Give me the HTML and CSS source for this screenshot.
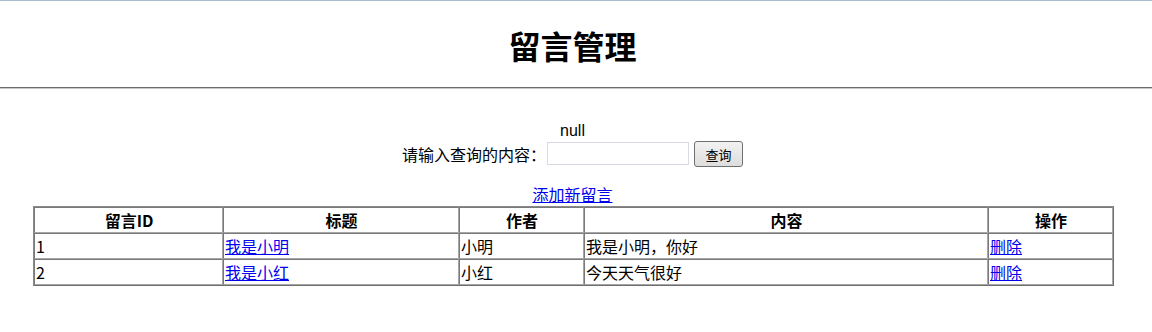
FILE: index.html
```html
<!DOCTYPE html>
<html lang="zh-CN">
<head>
    <meta charset="UTF-8">
    <title>留言管理</title>
    <link rel="stylesheet" href="styles.css">
</head>
<body>
    <div class="header">
        <h1>留言管理</h1>
    </div>
    <hr class="divider">
    <div class="search">
        <div class="msg">null</div>
        <form class="search-form">
            <label for="keyword">请输入查询的内容：</label>
            <input type="text" id="keyword" name="keyword">
            <button type="submit">查询</button>
        </form>
    </div>
    <div class="add">
        <a href="#">添加新留言</a>
    </div>
    <table class="list">
        <colgroup>
            <col class="c-id">
            <col class="c-title">
            <col class="c-author">
            <col class="c-content">
            <col class="c-op">
        </colgroup>
        <tr>
            <th>留言ID</th>
            <th>标题</th>
            <th>作者</th>
            <th>内容</th>
            <th>操作</th>
        </tr>
        <tr>
            <td>1</td>
            <td><a href="#">我是小明</a></td>
            <td>小明</td>
            <td>我是小明，你好</td>
            <td><a href="#">删除</a></td>
        </tr>
        <tr>
            <td>2</td>
            <td><a href="#">我是小红</a></td>
            <td>小红</td>
            <td>今天天气很好</td>
            <td><a href="#">删除</a></td>
        </tr>
    </table>
</body>
</html>
```

FILE: styles.css
```css
body {
    margin: 0;
    padding: 0;
    font-family: "Noto Sans CJK SC", "Liberation Sans", sans-serif;
    font-size: 16px;
    color: #000;
    background: #fff;
}
a {
    color: #0000ee;
}
.header {
    border-top: 1px solid #a9bdd3;
    height: 85px;
    padding-right: 7px;
    display: flex;
    align-items: center;
    justify-content: center;
}
.header h1 {
    margin: 0;
    font-size: 32px;
    font-weight: bold;
    line-height: 40px;
    padding-top: 3px;
}
.divider {
    margin: 1px 0 0 0;
    border: none;
    border-top: 1px solid #6d6d6d;
    border-bottom: 1px solid #c8c8c8;
    height: 0;
}
.search {
    margin-top: 31px;
    padding-right: 7px;
    text-align: center;
}
.msg {
    line-height: 22px;
    font-family: "Liberation Sans", sans-serif;
}
.search-form {
    margin: 0;
    display: flex;
    justify-content: center;
    align-items: center;
    height: 25px;
}
.search-form label {
    line-height: 20px;
    padding-bottom: 2px;
}
.search-form input {
    width: 138px;
    height: 19px;
    padding: 1px;
    margin: 0 5px 2px 1px;
    border: 1px solid #d6dbe4;
    font-size: 14px;
}
.search-form button {
    width: 49px;
    height: 26px;
    padding: 0;
    margin-bottom: 1px;
    font-family: "Noto Sans CJK SC", sans-serif;
    font-size: 13px;
    border: 1px solid #707070;
    border-radius: 3px;
    background: linear-gradient(#f2f2f2, #dddddd);
}
.add {
    margin-top: 16px;
    padding-right: 7px;
    text-align: center;
    line-height: 22px;
    height: 20px;
}
.list {
    margin: 3px 0 0 33px;
    width: 1081px;
    table-layout: fixed;
    border-collapse: separate;
    border-spacing: 0;
    border: 1px solid;
    border-color: #8a8a8a #6e6e6e #6e6e6e #8a8a8a;
}
.c-id { width: 189px; }
.c-title { width: 236px; }
.c-author { width: 125px; }
.c-content { width: 404px; }
.c-op { width: 125px; }
.list th, .list td {
    height: 24px;
    padding: 0 0 0 1px;
    border: 1px solid;
    border-color: #7a7a7a #a6a6a6 #a6a6a6 #7a7a7a;
    line-height: 22px;
    white-space: nowrap;
}
.list th {
    font-weight: bold;
    text-align: center;
}
.list td {
    text-align: left;
}
```
